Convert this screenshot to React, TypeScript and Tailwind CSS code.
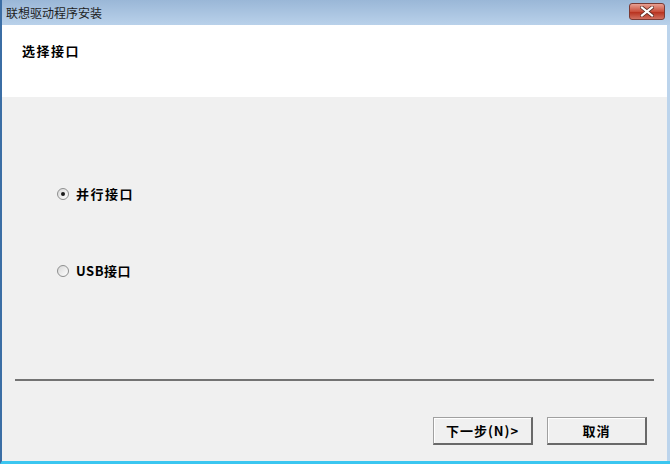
import React from "react";

function Radio({ checked }: { checked?: boolean }) {
  return (
    <span className="flex items-center justify-center w-[12px] h-[12px] rounded-full border border-[#8e8f8f] bg-[linear-gradient(135deg,#d8d8d8,#ffffff)]">
      {checked && <span className="w-[4px] h-[4px] rounded-full bg-[#1a1a1a]" />}
    </span>
  );
}

function Button({ label }: { label: string }) {
  return (
    <button className="w-[100px] h-[28px] flex items-center justify-center bg-[#f0f0f0] border-t border-l border-[#a0a0a0] border-r-2 border-b-2 border-r-[#696969] border-b-[#696969] shadow-[inset_1px_1px_0_#ffffff] text-[13px] font-bold text-black tracking-[1px]">
      {label}
    </button>
  );
}

export default function App() {
  const font = { fontFamily: '"SimSun", "Noto Sans CJK SC", "Liberation Sans", sans-serif' };
  return (
    <div
      className="w-[670px] h-[464px] flex flex-col bg-[#bcd4ec] border-l-2 border-l-[#3b6ea5] border-b-[3px] border-b-[#3bc6f0] overflow-hidden"
      style={font}
    >
      {/* title bar */}
      <div className="h-[25px] flex items-center justify-between pl-[4px] pr-[5px] bg-[linear-gradient(#9ab7d7,#b9d1ea)]">
        <span className="text-[12px] text-[#1e1e1e]">联想驱动程序安装</span>
        <span className="w-[36px] h-[17px] mb-[3px] flex items-center justify-center rounded-[3px] border border-[#7a3a34] bg-[linear-gradient(#e8a093,#c9503d_50%,#b8321f_55%,#d07060)]">
          <svg width="14" height="11" viewBox="0 0 14 11">
            <path d="M2 1.5 L12 9.5 M12 1.5 L2 9.5" stroke="#5a2a22" strokeWidth="3.6" strokeLinecap="square" />
            <path d="M2 1.5 L12 9.5 M12 1.5 L2 9.5" stroke="#ffffff" strokeWidth="2.2" strokeLinecap="square" />
          </svg>
        </span>
      </div>

      {/* client area */}
      <div className="flex-1 mr-[3px] flex flex-col bg-[#f0f0f0]">
        <div className="h-[72px] bg-white pl-[20px] pt-[12px]">
          <span className="text-[13px] font-bold text-black tracking-[1.5px]">选择接口</span>
        </div>

        <div className="flex flex-col pl-[55px] pt-[90px] gap-[63px]">
          <label className="flex items-center gap-[7px] h-[14px]">
            <Radio checked />
            <span className="text-[13px] font-bold text-black tracking-[1.5px]">并行接口</span>
          </label>
          <label className="flex items-center gap-[7px] h-[14px]">
            <Radio />
            <span className="text-[13px] font-bold text-black tracking-[0.5px]">USB接口</span>
          </label>
        </div>

        <div className="mt-[101px] mx-[13px] h-[2px] bg-[#737373]" />

        <div className="flex justify-end gap-[14px] pr-[20px] pt-[36px]">
          <Button label="下一步(N)>" />
          <Button label="取消" />
        </div>
      </div>
    </div>
  );
}
